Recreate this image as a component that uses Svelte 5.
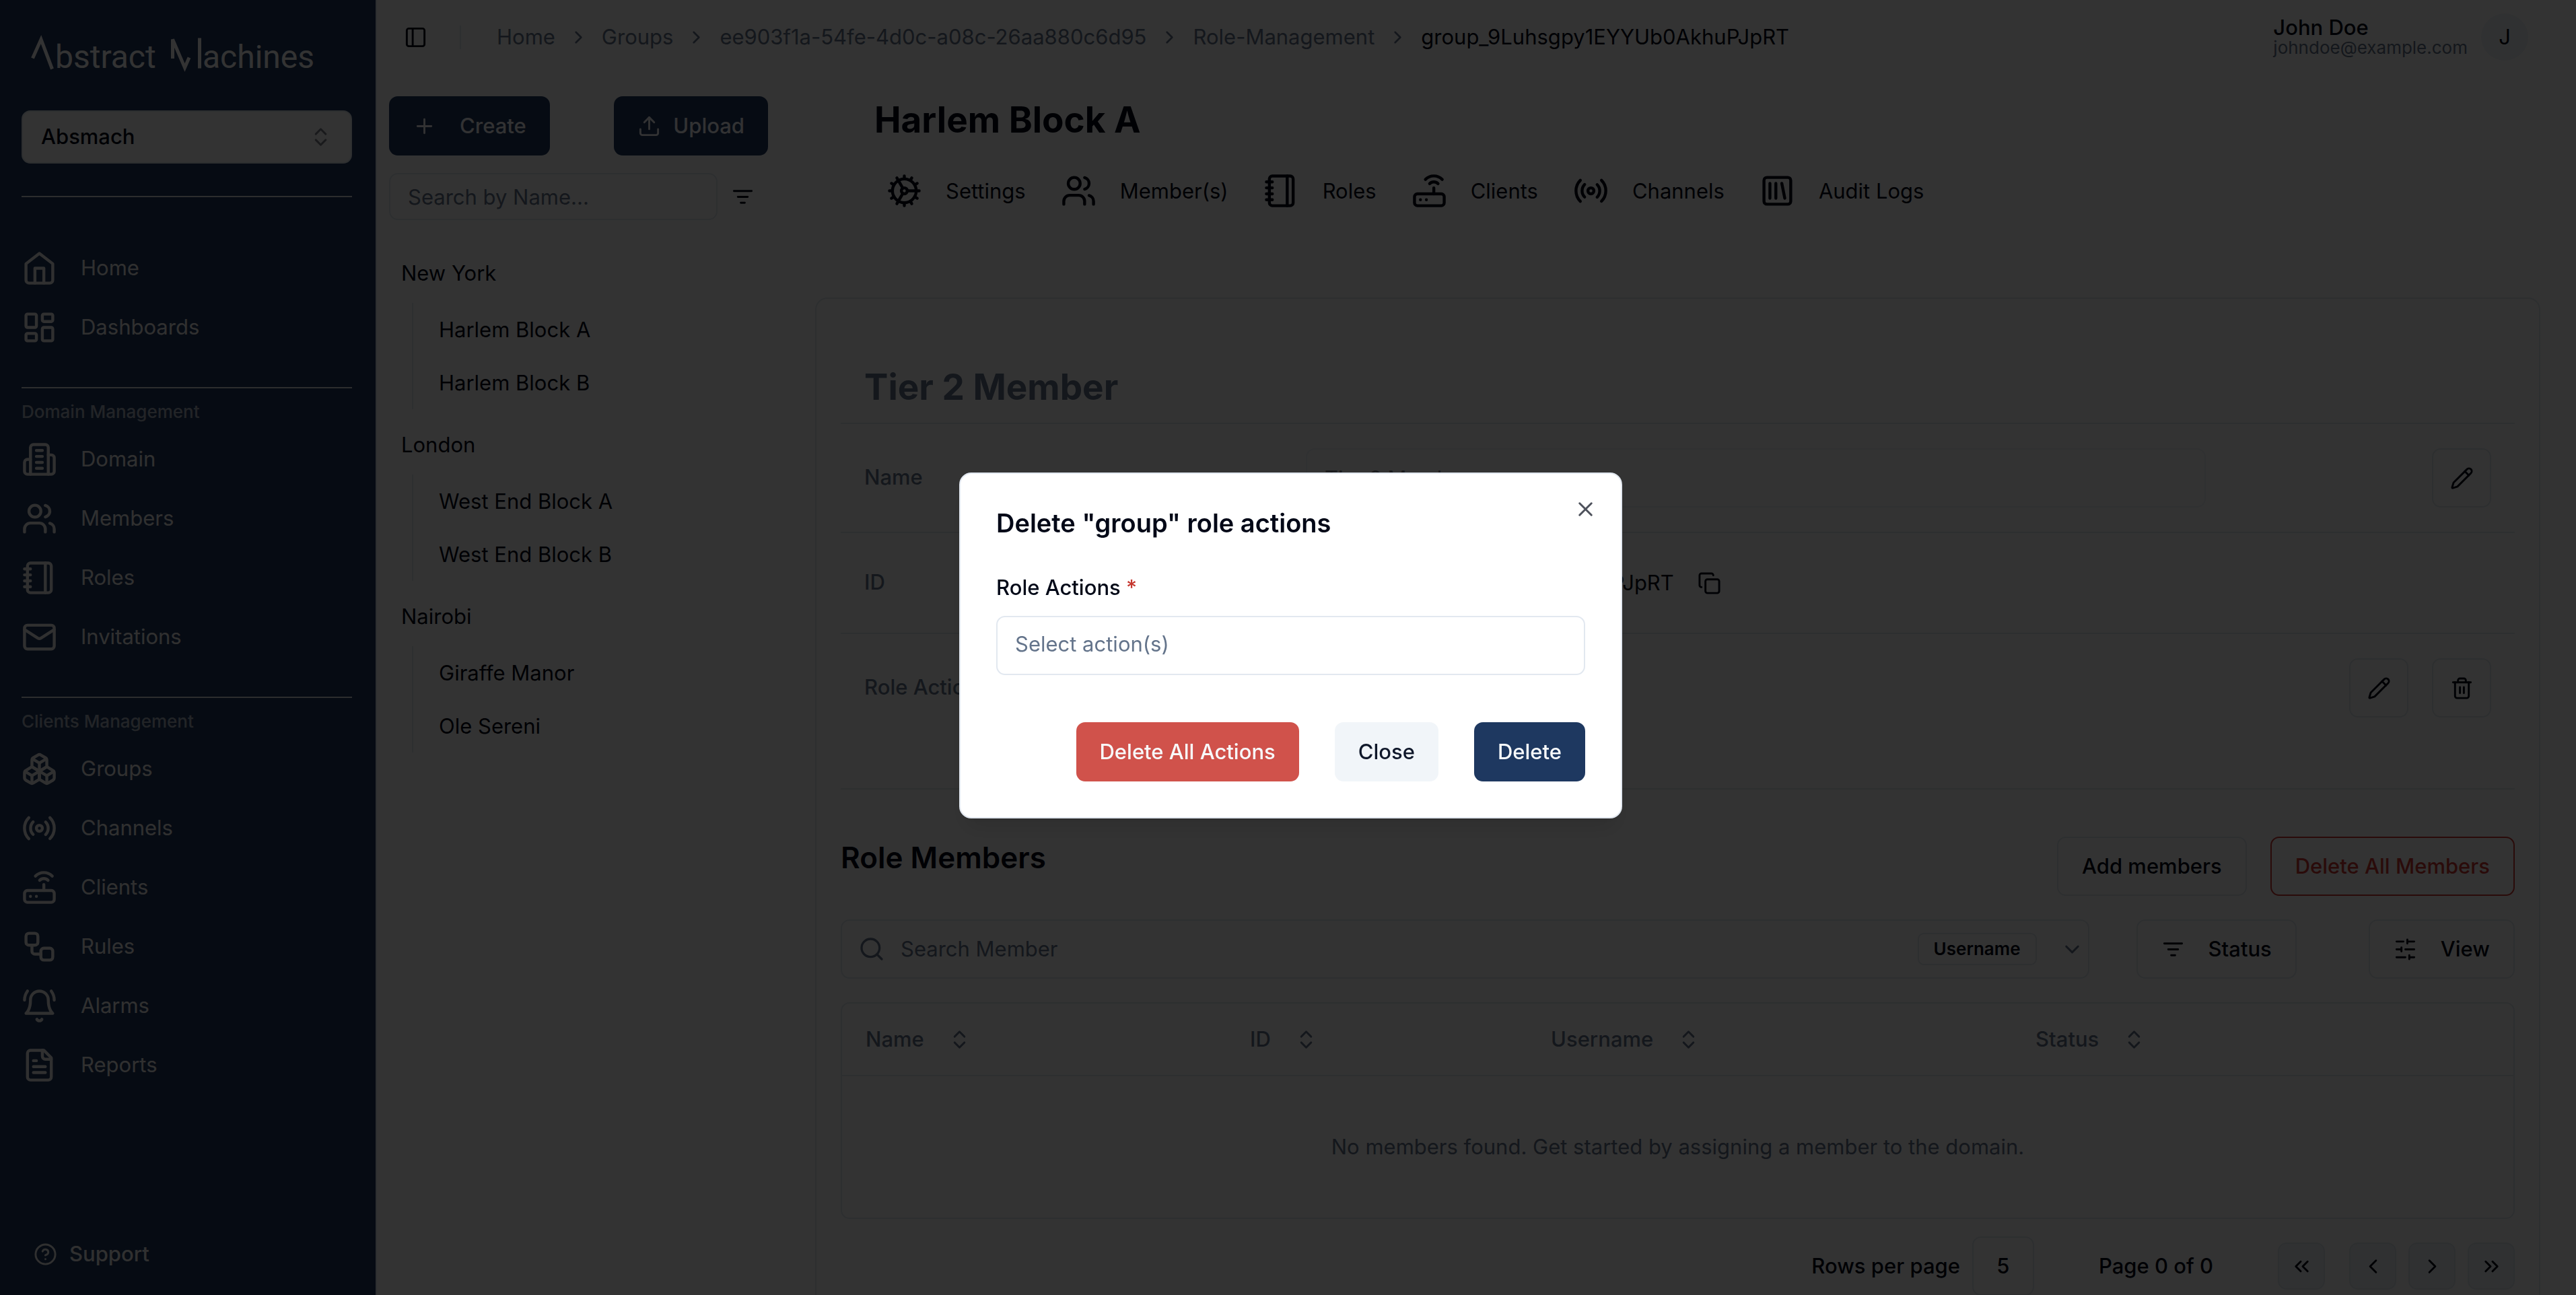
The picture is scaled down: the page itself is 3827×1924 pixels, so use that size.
<script>
  const icons = {
    home: '<path d="m3 9 9-7 9 7v11a2 2 0 0 1-2 2H5a2 2 0 0 1-2-2z"/><path d="M9 22V12h6v10"/>',
    dashboard: '<rect width="7" height="9" x="3" y="3" rx="1"/><rect width="7" height="5" x="14" y="3" rx="1"/><rect width="7" height="9" x="14" y="12" rx="1"/><rect width="7" height="5" x="3" y="16" rx="1"/>',
    building: '<path d="M6 22V4a2 2 0 0 1 2-2h8a2 2 0 0 1 2 2v18Z"/><path d="M6 12H4a2 2 0 0 0-2 2v6a2 2 0 0 0 2 2h2"/><path d="M18 9h2a2 2 0 0 1 2 2v9a2 2 0 0 1-2 2h-2"/><path d="M10 6h4M10 10h4M10 14h4M10 18h4"/>',
    users: '<path d="M16 21v-2a4 4 0 0 0-4-4H6a4 4 0 0 0-4 4v2"/><circle cx="9" cy="7" r="4"/><path d="M22 21v-2a4 4 0 0 0-3-3.87"/><path d="M16 3.13a4 4 0 0 1 0 7.75"/>',
    notebook: '<path d="M2 6h4M2 10h4M2 14h4M2 18h4"/><rect width="16" height="20" x="4" y="2" rx="2"/><path d="M16 2v20"/>',
    mail: '<rect width="20" height="16" x="2" y="4" rx="2"/><path d="m22 7-8.97 5.7a1.94 1.94 0 0 1-2.06 0L2 7"/>',
    boxes: '<path d="M2.97 12.92A2 2 0 0 0 2 14.63v3.24a2 2 0 0 0 .97 1.71l3 1.8a2 2 0 0 0 2.06 0L12 19v-5.5l-5-3-4.03 2.42Z"/><path d="m7 16.5-4.74-2.85"/><path d="m7 16.5 5-3"/><path d="M7 16.5v5.17"/><path d="M12 13.5V19l3.97 2.38a2 2 0 0 0 2.06 0l3-1.8a2 2 0 0 0 .97-1.71v-3.24a2 2 0 0 0-.97-1.71L17 10.5l-5 3Z"/><path d="m17 16.5-5-3"/><path d="m17 16.5 4.74-2.85"/><path d="M17 16.5v5.17"/><path d="M7.97 4.42A2 2 0 0 0 7 6.13v4.37l5 3 5-3V6.13a2 2 0 0 0-.97-1.71l-3-1.8a2 2 0 0 0-2.06 0l-3 1.8Z"/><path d="M12 8 7.26 5.15"/><path d="m12 8 4.74-2.85"/><path d="M12 13.5V8"/>',
    radio: '<path d="M4.9 19.1C1 15.2 1 8.8 4.9 4.9"/><path d="M7.8 16.2c-2.3-2.3-2.3-6.1 0-8.5"/><circle cx="12" cy="12" r="2"/><path d="M16.2 7.8c2.3 2.3 2.3 6.1 0 8.5"/><path d="M19.1 4.9C23 8.8 23 15.1 19.1 19"/>',
    router: '<rect width="20" height="8" x="2" y="14" rx="2"/><path d="M6.01 18H6M10.01 18H10M15 10v4"/><path d="M17.84 7.17a4 4 0 0 0-5.66 0"/><path d="M20.66 4.34a8 8 0 0 0-11.31 0"/>',
    workflow: '<rect width="8" height="8" x="3" y="3" rx="2"/><path d="M7 11v4a2 2 0 0 0 2 2h4"/><rect width="8" height="8" x="13" y="13" rx="2"/>',
    bell: '<path d="M6 8a6 6 0 0 1 12 0c0 7 3 9 3 9H3s3-2 3-9"/><path d="M10.3 21a1.94 1.94 0 0 0 3.4 0"/><path d="M4 2C2.8 3.7 2 5.7 2 8"/><path d="M22 8c0-2.3-.8-4.3-2-6"/>',
    file: '<path d="M15 2H6a2 2 0 0 0-2 2v16a2 2 0 0 0 2 2h12a2 2 0 0 0 2-2V7Z"/><path d="M14 2v4a2 2 0 0 0 2 2h4"/><path d="M10 9H8M16 13H8M16 17H8"/>',
    help: '<circle cx="12" cy="12" r="10"/><path d="M9.09 9a3 3 0 0 1 5.83 1c0 2-3 3-3 3"/><path d="M12 17h.01"/>',
    panel: '<rect width="18" height="18" x="3" y="3" rx="2"/><path d="M9 3v18"/>',
    cog: '<path d="M12 20a8 8 0 1 0 0-16 8 8 0 0 0 0 16Z"/><path d="M12 14a2 2 0 1 0 0-4 2 2 0 0 0 0 4Z"/><path d="M12 2v2M12 22v-2M17 20.66l-1-1.73M11 10.27 7 3.34M20.66 17l-1.73-1M3.34 7l1.73 1M14 12h8M2 12h2M20.66 7l-1.73 1M3.34 17l1.73-1M17 3.34l-1 1.73M11 13.73l-4 6.93"/>',
    library: '<rect width="18" height="18" x="3" y="3" rx="2"/><path d="M7 7v10M11 7v10M15 7l2 10"/>',
    pencil: '<path d="M21.174 6.812a1 1 0 0 0-3.986-3.987L3.842 16.174a2 2 0 0 0-.5.83l-1.321 4.352a.5.5 0 0 0 .623.622l4.353-1.32a2 2 0 0 0 .83-.497z"/><path d="m15 5 4 4"/>',
    trash: '<path d="M3 6h18"/><path d="M19 6v14c0 1-1 2-2 2H7c-1 0-2-1-2-2V6"/><path d="M8 6V4c0-1 1-2 2-2h4c1 0 2 1 2 2v2"/><path d="M10 11v6M14 11v6"/>',
    copy: '<rect width="14" height="14" x="8" y="8" rx="2"/><path d="M4 16c-1.1 0-2-.9-2-2V4c0-1.1.9-2 2-2h10c1.1 0 2 .9 2 2"/>',
    upload: '<path d="M21 15v4a2 2 0 0 1-2 2H5a2 2 0 0 1-2-2v-4"/><path d="m17 8-5-5-5 5"/><path d="M12 3v12"/>',
    plus: '<path d="M5 12h14M12 5v14"/>',
    filter: '<path d="M3 6h18M7 12h10M10 18h4"/>',
    sliders: '<path d="M21 4h-7M10 4H3M21 12h-9M8 12H3M21 20h-5M12 20H3M14 2v4M8 10v4M16 18v4"/>',
    search: '<circle cx="11" cy="11" r="8"/><path d="m21 21-4.3-4.3"/>',
    sort: '<path d="m7 15 5 5 5-5"/><path d="m7 9 5-5 5 5"/>',
    right: '<path d="m9 18 6-6-6-6"/>',
    left: '<path d="m15 18-6-6 6-6"/>',
    down: '<path d="m6 9 6 6 6-6"/>',
    first: '<path d="m11 17-5-5 5-5M18 17l-5-5 5-5"/>',
    last: '<path d="m6 17 5-5-5-5M13 17l5-5-5-5"/>',
    close: '<path d="M18 6 6 18M6 6l12 12"/>'
  };

  const sections = [
    { title: '', items: [['home', 'Home'], ['dashboard', 'Dashboards']] },
    {
      title: 'Domain Management',
      items: [['building', 'Domain'], ['users', 'Members'], ['notebook', 'Roles'], ['mail', 'Invitations']]
    },
    {
      title: 'Clients Management',
      items: [['boxes', 'Groups'], ['radio', 'Channels'], ['router', 'Clients'], ['workflow', 'Rules'], ['bell', 'Alarms'], ['file', 'Reports']]
    }
  ];

  const crumbs = ['Home', 'Groups', 'ee903f1a-54fe-4d0c-a08c-26aa880c6d95', 'Role-Management'];
  const roleId = 'group_9Luhsgpy1EYYUb0AkhuPJpRT';

  const tree = [
    ['New York', ['Harlem Block A', 'Harlem Block B']],
    ['London', ['West End Block A', 'West End Block B']],
    ['Nairobi', ['Giraffe Manor', 'Ole Sereni']]
  ];

  const tabs = [
    ['cog', 'Settings'], ['users', 'Member(s)'], ['notebook', 'Roles'],
    ['router', 'Clients'], ['radio', 'Channels'], ['library', 'Audit Logs']
  ];

  const columns = ['Name', 'ID', 'Username', 'Status'];
  const pages = [['first', 'First page'], ['left', 'Previous page'], ['right', 'Next page'], ['last', 'Last page']];
</script>

{#snippet icon(name, size = 'sm')}
  <svg class="icon {size}" viewBox="0 0 24 24" aria-hidden="true">{@html icons[name]}</svg>
{/snippet}

<div class="app">
  <aside class="sidebar">
    <svg class="logo" viewBox="0 0 424 72" role="img" aria-label="Abstract Machines">
      <path class="mark" d="M2.500 37.500 L15 9.500 L31.500 53.500 M210.500 38 V9.500 L228.500 51.500 L235 36.500 M250.500 7.500 V52.500" />
      <text x="36" y="52">bstract</text>
      <text x="255" y="52">achines</text>
    </svg>
    <div class="switcher">
      <select aria-label="Domain"><option>Absmach</option></select>
      {@render icon('sort')}
    </div>
    <nav aria-label="Main">
      {#each sections as section}
        <section class:titled={section.title}>
          {#if section.title}<h2>{section.title}</h2>{/if}
          {#each section.items as [name, label]}
            <a href="#{label}">{@render icon(name, 'lg')}{label}</a>
          {/each}
        </section>
      {/each}
    </nav>
    <a class="support" href="#support">{@render icon('help')}Support</a>
  </aside>

  <div class="page">
    <header>
      <button class="plain" aria-label="Toggle sidebar">{@render icon('panel')}</button>
      <span class="separator"></span>
      <nav class="crumbs" aria-label="Breadcrumb">
        {#each crumbs as crumb}
          <a href="#{crumb}">{crumb}</a>{@render icon('right', 'xs')}
        {/each}
        <span class="current">{roleId}</span>
      </nav>
      <div class="user">
        <div class="who"><strong>John Doe</strong><span>johndoe@example.com</span></div>
        <button class="avatar" aria-label="Account">J</button>
      </div>
    </header>

    <div class="body">
      <div class="browser">
        <div class="actions">
          <button class="btn primary wide">{@render icon('plus')}Create</button>
          <button class="btn primary">{@render icon('upload')}Upload</button>
        </div>
        <div class="find">
          <input type="text" placeholder="Search by Name..." aria-label="Search by name" />
          <button class="plain" aria-label="Filter">{@render icon('filter')}</button>
        </div>
        {#each tree as [city, places]}
          <div class="branch">
            <a class="city" href="#{city}">{city}</a>
            <ul>
              {#each places as place}<li><a href="#{place}">{place}</a></li>{/each}
            </ul>
          </div>
        {/each}
      </div>

      <main>
        <h1>Harlem Block A</h1>
        <nav class="tabs" aria-label="Group">
          {#each tabs as [name, label]}
            <a href="#{label}">{@render icon(name, 'lg')}{label}</a>
          {/each}
        </nav>

        <div class="card">
          <h2 class="role">Tier 2 Member</h2>
          <div class="row">
            <label for="role-name">Name</label>
            <input id="role-name" type="text" value="Tier 2 Member" disabled />
            <div class="tools">
              <button class="btn outline square" aria-label="Edit name">{@render icon('pencil')}</button>
            </div>
          </div>
          <div class="row id">
            <span class="key">ID</span>
            <div class="value">{roleId}<button class="plain" aria-label="Copy ID">{@render icon('copy')}</button></div>
          </div>
          <div class="row last">
            <span class="key">Role Actions</span>
            <span></span>
            <div class="tools">
              <button class="btn outline square" aria-label="Edit actions">{@render icon('pencil')}</button>
              <button class="btn outline square" aria-label="Delete actions">{@render icon('trash')}</button>
            </div>
          </div>

          <div class="members-head">
            <h2>Role Members</h2>
            <button class="btn outline">Add members</button>
            <button class="btn outline danger">Delete All Members</button>
          </div>

          <div class="filters">
            <div class="search">
              {@render icon('search', 'md')}
              <input type="text" placeholder="Search Member" aria-label="Search member" />
              <span class="badge">Username</span>
              <button class="plain" aria-label="Search field">{@render icon('down')}</button>
            </div>
            <button class="btn outline wide status">{@render icon('filter')}Status</button>
            <button class="btn outline wide">{@render icon('sliders')}View</button>
          </div>

          <div class="table-box">
            <table>
              <colgroup>
                <col class="col-name" />
                <col class="col-id" />
                <col class="col-username" />
                <col />
              </colgroup>
              <thead>
                <tr>
                  {#each columns as column}
                    <th scope="col"><button class="plain">{column}{@render icon('sort')}</button></th>
                  {/each}
                </tr>
              </thead>
              <tbody>
                <tr><td colspan="4">No members found. Get started by assigning a member to the domain.</td></tr>
              </tbody>
            </table>
          </div>

          <div class="pager">
            <label for="rows">Rows per page</label>
            <select id="rows"><option>5</option></select>
            <span class="count">Page 0 of 0</span>
            {#each pages as [name, label]}
              <button class={name} aria-label={label}>{@render icon(name)}</button>
            {/each}
          </div>
        </div>
      </main>
    </div>
  </div>
</div>

<div class="overlay">
  <div class="dialog" role="dialog" aria-modal="true" aria-labelledby="dialog-title">
    <button class="plain dismiss" aria-label="Dismiss">{@render icon('close')}</button>
    <h2 id="dialog-title">Delete "group" role actions</h2>
    <label for="actions">Role Actions <span>*</span></label>
    <input id="actions" type="text" placeholder="Select action(s)" />
    <div class="buttons">
      <button class="btn destructive">Delete All Actions</button>
      <button class="btn secondary">Close</button>
      <button class="btn primary">Delete</button>
    </div>
  </div>
</div>

<style>
  :global(body) {
    margin: 0;
    overflow: hidden;
  }

  .app,
  .overlay {
    --navy: #1e3860;
    --ink: #020817;
    --muted: #64748b;
    --line: #e2e8f0;
    font-family: Inter, "Liberation Sans", sans-serif;
    font-size: 31px;
    line-height: 44px;
    color: var(--ink);
  }

  .app {
    display: flex;
    height: 100vh;
    overflow: hidden;
    background: #fff;
  }

  a {
    color: inherit;
    text-decoration: none;
  }

  button,
  input,
  select {
    box-sizing: border-box;
    margin: 0;
    font: inherit;
    color: inherit;
  }

  h1,
  h2 {
    margin: 0;
  }

  input::placeholder {
    color: var(--muted);
    opacity: 1;
  }

  .icon {
    flex: none;
    display: block;
    width: 35px;
    height: 35px;
    fill: none;
    stroke: currentColor;
    stroke-width: 2;
    stroke-linecap: round;
    stroke-linejoin: round;
  }

  .icon.xs {
    width: 31px;
    height: 31px;
  }

  .icon.md {
    width: 40px;
    height: 40px;
  }

  .icon.lg {
    width: 53px;
    height: 53px;
  }

  .plain {
    display: flex;
    align-items: center;
    padding: 0;
    border: 0;
    background: none;
  }

  .btn {
    display: flex;
    align-items: center;
    justify-content: center;
    gap: 18px;
    height: 88px;
    padding: 0 35px;
    border: 0;
    border-radius: 13px;
    font-weight: 500;
    white-space: nowrap;
  }

  .wide {
    gap: 35px;
  }

  .primary {
    background: var(--navy);
    color: #f8fafc;
  }

  .outline {
    border: 2px solid var(--line);
    background: #fff;
  }

  .square {
    width: 88px;
    padding: 0;
  }

  .danger {
    border-color: #cf3a32;
    color: #cf3a32;
  }

  /* Sidebar */
  .sidebar {
    display: flex;
    flex: none;
    flex-direction: column;
    box-sizing: border-box;
    width: 560px;
    padding: 49px 35px 39px 32px;
    border-right: 2px solid var(--line);
    background: var(--navy);
    color: #f1f1f1;
  }

  .logo {
    flex: none;
    width: 424px;
    height: 72px;
    margin: 0 0 43px 14px;
    font-family: Roboto, sans-serif;
    font-size: 48px;
    fill: #fff;
  }

  .mark {
    fill: none;
    stroke: #fff;
    stroke-width: 5;
  }

  .switcher {
    display: grid;
    align-items: center;
    margin-bottom: 48px;
    color: var(--ink);
  }

  .switcher select {
    grid-area: 1 / 1;
    height: 79px;
    padding: 0 27px 2px;
    border: 2px solid var(--line);
    border-radius: 13px;
    background: #fff;
    font-weight: 500;
    appearance: none;
  }

  .switcher .icon {
    grid-area: 1 / 1;
    justify-self: end;
    margin-right: 29px;
    opacity: 0.5;
    pointer-events: none;
  }

  section {
    padding: 61px 0 45px;
    border-top: 2px solid rgba(255, 255, 255, 0.85);
  }

  section.titled {
    padding-top: 17px;
  }

  section h2 {
    margin-bottom: 8px;
    font-size: 26px;
    font-weight: 500;
    line-height: 36px;
    color: rgba(255, 255, 255, 0.65);
  }

  section a {
    display: flex;
    align-items: center;
    gap: 35px;
    height: 88px;
  }

  .support {
    display: flex;
    align-items: center;
    gap: 18px;
    margin: auto 0 0 18px;
    font-weight: 500;
  }

  /* Top bar */
  .page {
    flex: 1;
    min-width: 0;
  }

  header {
    display: flex;
    align-items: center;
    height: 110px;
    padding: 0 71px 0 40px;
  }

  .separator {
    width: 2px;
    height: 35px;
    margin: 0 53px 0 48px;
    background: var(--line);
  }

  .crumbs {
    display: flex;
    align-items: center;
    gap: 19px;
    color: var(--muted);
  }

  .current {
    color: var(--ink);
  }

  .user {
    display: flex;
    align-items: center;
    gap: 20px;
    margin-left: auto;
  }

  .who {
    display: grid;
  }

  .who strong {
    font-weight: 500;
    line-height: 31px;
  }

  .who span {
    font-size: 26px;
    line-height: 30px;
    color: var(--muted);
  }

  .avatar {
    width: 70px;
    height: 70px;
    padding: 0;
    border: 0;
    border-radius: 50%;
    background: #f1f5f9;
  }

  /* Group browser */
  .body {
    display: flex;
    gap: 70px;
    padding: 33px 53px 0 18px;
  }

  .browser {
    flex: none;
    width: 563px;
  }

  .actions {
    display: flex;
    justify-content: space-between;
  }

  .find {
    display: flex;
    align-items: center;
    gap: 20px;
    margin: 26px 20px 26px 0;
  }

  .find input {
    flex: 1;
    min-width: 0;
    height: 70px;
    padding: 0 26px;
    border: 2px solid var(--line);
    border-radius: 13px;
    background: #fff;
  }

  .branch {
    padding: 9px 0 0 18px;
  }

  .city {
    display: block;
    line-height: 88px;
  }

  .branch ul {
    margin: 0 0 0 16px;
    padding: 0 0 0 38px;
    border-left: 2px solid var(--line);
    list-style: none;
  }

  .branch li {
    line-height: 79px;
  }

  /* Group details */
  main {
    flex: 1;
    min-width: 0;
  }

  h1,
  .role {
    font-size: 53px;
    font-weight: 700;
    line-height: 70px;
  }

  h1 {
    padding-left: 88px;
  }

  .tabs {
    display: flex;
    gap: 52px;
    padding: 44px 0 132px 106px;
  }

  .tabs a {
    display: flex;
    align-items: center;
    gap: 35px;
  }

  .card {
    padding: 96px 36px 36px;
    border: 2px solid var(--line);
    border-radius: 18px;
  }

  .role {
    padding: 0 35px 18px;
    color: var(--muted);
  }

  .row {
    display: grid;
    grid-template-columns: 691fr 1337fr 459fr;
    align-items: start;
    padding: 36px 0;
    border-top: 2px solid var(--line);
  }

  .row label,
  .row .key {
    padding-left: 35px;
    font-weight: 500;
    line-height: 86px;
    color: var(--muted);
  }

  .row input {
    height: 88px;
    padding: 0 26px;
    border: 2px solid var(--line);
    border-radius: 13px;
    background: #fff;
    opacity: 0.5;
  }

  .row.id {
    padding: 30px 0;
  }

  .value {
    display: flex;
    align-items: center;
    gap: 35px;
    height: 88px;
  }

  .row.last {
    padding-bottom: 105px;
    border-bottom: 2px solid var(--line);
  }

  .tools {
    display: flex;
    justify-content: flex-end;
    gap: 35px;
    padding-right: 35px;
  }

  .members-head {
    display: flex;
    align-items: center;
    gap: 35px;
    padding: 70px 0 35px;
  }

  .members-head h2 {
    align-self: flex-start;
    margin-right: auto;
    font-size: 44px;
    font-weight: 600;
    line-height: 62px;
  }

  .filters {
    display: flex;
    margin-bottom: 35px;
  }

  .search {
    display: flex;
    flex: 1;
    align-items: center;
    box-sizing: border-box;
    height: 88px;
    padding: 0 6px 0 24px;
    border: 2px solid var(--line);
    border-radius: 13px;
    color: var(--muted);
  }

  .search input {
    flex: 1;
    min-width: 0;
    padding: 0 23px;
    border: 0;
    background: none;
  }

  .badge {
    margin-right: 35px;
    padding: 0 22px;
    border: 2px solid var(--line);
    border-radius: 9px;
    font-size: 26px;
    font-weight: 600;
    color: var(--ink);
  }

  .status {
    margin: 0 107px 0 70px;
  }

  .table-box {
    border: 2px solid var(--line);
    border-radius: 13px;
  }

  table {
    width: 100%;
    border-collapse: collapse;
    table-layout: fixed;
    color: var(--muted);
  }

  .col-name {
    width: 23%;
  }

  .col-id {
    width: 18%;
  }

  .col-username {
    width: 29%;
  }

  th {
    height: 106px;
    padding: 0 35px;
    border-bottom: 2px solid var(--line);
    font-weight: 500;
  }

  th button {
    gap: 35px;
  }

  td {
    height: 210px;
    padding: 0;
    text-align: center;
  }

  .pager {
    display: flex;
    align-items: center;
    justify-content: flex-end;
    gap: 18px;
    padding-top: 26px;
    font-weight: 500;
  }

  .pager select {
    width: 92px;
    height: 88px;
    padding: 0;
    border: 2px solid var(--line);
    border-radius: 13px;
    background: #fff;
    text-align: center;
    text-align-last: center;
    appearance: none;
  }

  .count {
    margin: 0 78px;
  }

  .pager button {
    display: grid;
    place-items: center;
    width: 70px;
    height: 70px;
    padding: 0;
    border: 2px solid var(--line);
    border-radius: 13px;
    background: #f1f5f9;
  }

  .pager .first {
    margin-right: 18px;
  }

  /* Dialog */
  .overlay {
    position: fixed;
    inset: 0;
    display: grid;
    place-items: center;
    padding: 0 0 6px 8px;
    background: rgba(0, 0, 0, 0.8);
  }

  .dialog {
    position: relative;
    box-sizing: border-box;
    width: 985px;
    padding: 53px;
    border: 2px solid var(--line);
    border-radius: 18px;
    background: #fff;
    box-shadow: 0 22px 33px -7px rgba(0, 0, 0, 0.1), 0 9px 13px -9px rgba(0, 0, 0, 0.1);
  }

  .dismiss {
    position: absolute;
    top: 35px;
    right: 35px;
    opacity: 0.7;
  }

  .dialog h2 {
    margin-bottom: 54px;
    font-size: 38px;
    font-weight: 600;
    line-height: 40px;
  }

  .dialog label {
    display: block;
    margin-bottom: 20px;
    font-weight: 500;
  }

  .dialog label span {
    color: #c5362e;
  }

  .dialog input {
    width: 100%;
    height: 88px;
    padding: 0 26px 6px;
    border: 2px solid var(--line);
    border-radius: 13px;
    background: #fff;
  }

  .buttons {
    display: flex;
    justify-content: flex-end;
    gap: 53px;
    margin-top: 70px;
  }

  .destructive {
    background: #d0524b;
    color: #f8fafc;
  }

  .secondary {
    background: #f1f5f9;
    color: #0f172a;
  }
</style>
